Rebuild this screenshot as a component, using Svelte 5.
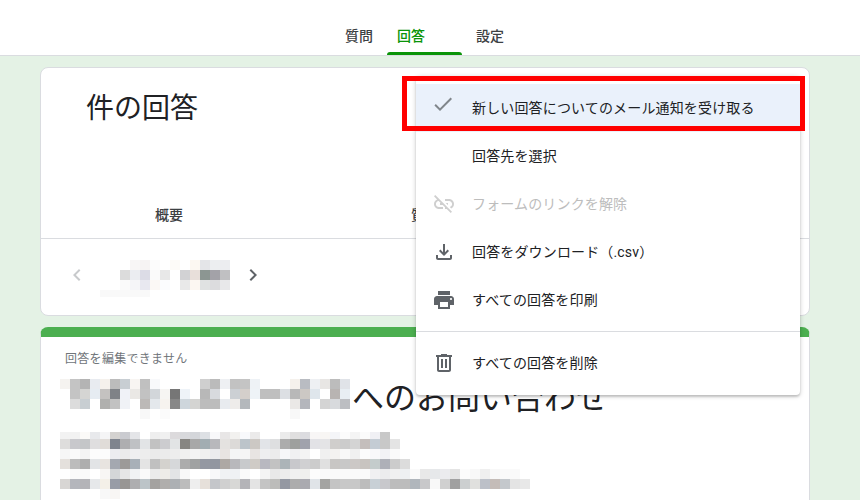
<script>
  const tabs = ['質問', '回答', '設定']
  const subTabs = ['概要', '質問', '個別']

  const menu = [
    { label: '新しい回答についてのメール通知を受け取る', icon: 'check', active: true },
    { label: '回答先を選択' },
    { label: 'フォームのリンクを解除', icon: 'unlink', disabled: true },
    { label: '回答をダウンロード（.csv）', icon: 'download' },
    { label: 'すべての回答を印刷', icon: 'print' },
    { divider: true },
    { label: 'すべての回答を削除', icon: 'trash' },
  ]

  const icons = {
    check: 'M9 16.17L4.83 12l-1.42 1.41L9 19 21 7l-1.41-1.41z',
    unlink: 'M17 7h-4v1.9h4c1.71 0 3.1 1.39 3.1 3.1 0 1.43-.98 2.63-2.31 2.98l1.46 1.46C20.88 15.61 22 13.95 22 12c0-2.76-2.24-5-5-5zm-1 4h-2.19l2 2H16zM2 4.27l3.11 3.11C3.29 8.12 2 9.91 2 12c0 2.76 2.24 5 5 5h4v-1.9H7c-1.71 0-3.1-1.39-3.1-3.1 0-1.59 1.21-2.9 2.76-3.07L8.73 11H8v2h2.73L13 15.27V17h1.73l4.01 4L20 19.74 3.27 3 2 4.27z',
    download: 'M18 15v3H6v-3H4v3c0 1.1.9 2 2 2h12c1.1 0 2-.9 2-2v-3h-2zm-1-4l-1.41-1.41L13 12.17V4h-2v8.17L8.41 9.59 7 11l5 5 5-5z',
    print: 'M19 8H5c-1.66 0-3 1.34-3 3v6h4v4h12v-4h4v-6c0-1.66-1.34-3-3-3zm-3 11H8v-5h8v5zm3-7c-.55 0-1-.45-1-1s.45-1 1-1 1 .45 1 1-.45 1-1 1zm-1-9H6v4h12V3z',
    trash: 'M15 4V3H9v1H4v2h1v13c0 1.1.9 2 2 2h10c1.1 0 2-.9 2-2V6h1V4h-5zm2 15H7V6h10v13zM9 8h2v9H9zm4 0h2v9h-2z',
  }

  // blurred-out personal data: [row height, cell colours]
  const dateBlur = [
    [10, 'fff fff fff f8f6f6 f6f3f3 fcfcfc fff fdfbf8 fff fcf8f2 e4e5e8 eceef0 ecedf0'],
    [10, 'fff fff dcdcdc ebedf1 dcdce6 fafafa e8e8e8 fff d2d2d4 e8dfda 8c9692 a3a2a8 c0c0c2'],
    [10, 'fff fff fafafa f5f5f8 e8e8f0 fbf8f5 fbfcfe fff e9e9e9 fcf7f2 e0e2e2 dcdcde e8e8ea'],
    [7, 'f9f9f9 f9f9f9 f9f9f9 f9f9f9 f9f9f9'],
  ]
  const titleBlur = [
    [10, 'f5f3f0 c4c4c4 b4b4b4 e8ebf0 f5f1ec bcbcbc c8ced3 f8f5f2 c0c0c0 f8f9fb fff fff fff fff cfcfcf bbbbbb eef0f3 c2c2c2 c4c4c4 eef2f6 fff fff fff f5f1ec b9bcc2 eef0f3 e8e6e4 bcbcbc e0e3e8'],
    [10, 'fff c4c4c4 d5d5d3 e6ecf2 c4c2c0 7f8287 f0f2f7 eae8e5 c2c2c2 d2d6da f6f5f3 767676 eef3f8 fff b8b8b8 d8dade fff ccd0d4 d4cfcb eef3f7 bfbfbf bfbfbf dcdfe3 b8b8b8 ccc8c4 dfe6ec fff b8b4b2 e8eef3'],
    [10, 'fff dcdcdc c8ced2 fff b0b0ae c2c2c2 f0f2f6 fff bcb9b7 e4e8ec f6f3ef 878787 ced6dc d4d4d2 bcbcbc bcbcbc e8ebef eeecea b4b8bc fff fff fff fff eae8e6 b4b6bc fff d4d4d4 d8dadd bcbec2'],
    [10, 'fff fff fff fff fff fff fff fff f8f8f8 fff fbfbfb fff fff fff fff fff fff fff fff fff fff fff fff f8f8f8'],
  ]
  const bodyBlur = [
    [7, 'f2f2f2 f2f2f2 fbfaf8 e8e9ec f5f5f6 d4d2d0 cacbd0 e4e5e8 fff eeeeee f0f0f0 dcdadc d8d9dc d4d6da dde0e4 f8f8fa e8e6e6 f2f1ef f8f9fc ebeaea fff fff ebebeb e0dfdf dcdce0 f8f6f6 f8f6f4 f4f5f8 fcfcfc f4f4f4 fbfbfb f0f0f4 c8c8c8'],
    [10, 'dedddc c8c8cc c4c6c8 dfdedf e0dcd8 7f848e aeaeb0 bfc1c4 e2e4e6 c2c2c2 cccccf e2e4e5 878682 a8a8a8 a2adb2 b8b8bc e4e2e0 dcdad8 bcc4ca ccc8c4 e2e4e8 dedfe0 acacac 9ea09e a0a2ac e2e2e6 e4e4e6 d0cecc cccccc d4d4d4 c4bebc c4ccd4 c8c8c8 e4e4e4'],
    [10, 'f6f6f6 fafafa f4f4f4 fcfcfc fcfcfc ececf0 ebebeb efeff1 ededed ebebeb ebebeb ededed f0f0ef f4f4f4 f0f0f0 ebebee e8e4e2 f4f5f6 f5f5f5 e8e4e2 eeeef0 ececec f6f7f9 f0f0f2 f4f4f4 fff f0f0f0 f4f2f0 f8f8f8 f0f0f0 fcfcfc f8f8fa f2f2f6 fafafa'],
    [10, 'e4e0dc bcbcbc aeaeae e2e4e6 e8e4e0 a4a8b0 9c9a98 a8b0b8 e4e4e4 c0c0c0 d4d2ce d6d8da acacac a0a2a2 9498a2 9296a0 ada8a4 b8b8bc c8cacc cfcbc6 b8b8c0 c2c2c2 acb4b8 c8c8cc d0d0d2 cccccc e0e0e0 c8c6c4 c8c8c8 ccc8c6 c8c4c0 c4cccc aeb0b8 cccccc dcdcdc'],
    [10, 'fff fafafa fafafa fff f8f6f4 d4d6d8 e6e6e6 f0f2f4 fafafa ebebeb eeece8 e2e4e6 f8f8f8 fff fff f8f8fa f0f2f4 eff1f4 fafafa fff f4f4f4 e8e8e8 ececec f0f0f0 f0f0ee fcfcfc fafafa fafafa fafafa fafafa fafafa f0f0f2 ececee f0f0f0 eef0f2 fafafa e8e8e8 e6e8ea ebebee e4e4e4 fcfcfc f8f8f8 efefef f8f8f8 fafafa fafafa'],
    [10, 'd8d6d4 b4b6bc b4b4b8 e6e8ea f4f0e8 989ca6 989694 aeaeb0 bcc4c8 a4a2a0 b0aeac acb0b4 bcbcbc eeeeee e6e0da c4c6ca d0d0d0 d8d8d6 b4b4b8 e4e4e4 c4c4c4 bcbcba 9498a2 acacac aaaab0 e0e4e8 a4a4a2 c4c4c4 c8c8c8 c8c8c8 bcbcbc c8d0d6 c8c8cc bcbcbc bcbcbc b0b6bc c8c8ca f8f8f8 d0d0d0 a0a0a0 cccfd0 e0e0de bcc0c8 c4bcb8 c4c8cc e4e4e4 e8e8e8'],
    [10, 'fff fff fff fff f8f8f8 f8f6f4 fff'],
  ]
</script>

{#snippet blur(rows)}
  <div class="blur">
    {#each rows as [h, cells]}
      <div class="blur-row" style="height:{h}px">
        {#each cells.split(' ') as c}
          <i style="background:#{c}"></i>
        {/each}
      </div>
    {/each}
  </div>
{/snippet}

<div class="page">
  <header>
    {#each tabs as tab, i}
      <div class="tab" class:active={i === 1}>
        <span>{tab}</span>
        {#if i === 1}<b></b>{/if}
      </div>
    {/each}
  </header>

  <main>
    <section class="card summary">
      <h1>件の回答</h1>
      <nav>
        {#each subTabs as tab}
          <span>{tab}</span>
        {/each}
      </nav>
      <div class="pager">
        <svg class="chev off" viewBox="0 0 24 24"><path d="M15.41 7.41L14 6l-6 6 6 6 1.41-1.41L10.83 12z" /></svg>
        {@render blur(dateBlur)}
        <svg class="chev" viewBox="0 0 24 24"><path d="M10 6L8.59 7.41 13.17 12l-4.58 4.59L10 18l6-6z" /></svg>
      </div>
    </section>

    <section class="card response">
      <p class="notice">回答を編集できません</p>
      <div class="title-row">
        {@render blur(titleBlur)}
        <h2>へのお問い合わせ</h2>
      </div>
      {@render blur(bodyBlur)}
    </section>
  </main>

  <div class="menu">
    {#each menu as item}
      {#if item.divider}
        <hr />
      {:else}
        <div class="item" class:active={item.active} class:disabled={item.disabled}>
          <span class="icon">
            {#if item.icon}
              <svg viewBox={item.icon === 'check' ? '1 4 24 24' : '0 0 24 24'}><path d={icons[item.icon]} /></svg>
            {/if}
          </span>
          <span class="label">{item.label}</span>
        </div>
      {/if}
    {/each}
  </div>

  <div class="callout"></div>
</div>

<style>
  :global(body) {
    margin: 0;
  }

  .page {
    position: relative;
    width: 860px;
    height: 500px;
    overflow: hidden;
    background: #e4f2e5;
    color: #202124;
    font-family: Roboto, "Noto Sans CJK JP", sans-serif;
    font-size: 14px;
  }

  header {
    display: flex;
    gap: 14px;
    height: 55px;
    padding-left: 345px;
    background: #fff;
    border-bottom: 1px solid #dadce0;
  }

  .tab {
    display: flex;
    flex-direction: column;
    justify-content: space-between;
    font-weight: 500;
    color: #3c4043;
  }

  .tab span {
    margin-top: 26px;
    line-height: 20px;
  }

  .tab.active {
    width: 75px;
    color: #0a9408;
  }

  .tab.active span {
    padding-left: 10px;
  }

  .tab b {
    display: block;
    height: 3px;
    background: #0a9408;
    border-radius: 3px 3px 0 0;
  }

  main {
    padding: 11px 50px 0 40px;
    width: 770px;
  }

  .card {
    background: #fff;
    border: 1px solid #dadce0;
    border-radius: 8px;
  }

  .summary {
    height: 249px;
    box-sizing: border-box;
  }

  h1 {
    margin: 0;
    height: 122px;
    padding: 21px 0 0 45px;
    box-sizing: border-box;
    font-size: 28px;
    font-weight: 400;
    line-height: 40px;
  }

  nav {
    display: grid;
    grid-template-columns: repeat(3, 1fr);
    height: 48px;
    border-bottom: 1px solid #dadce0;
  }

  nav span {
    display: flex;
    align-items: center;
    justify-content: center;
    font-weight: 500;
    color: #3c4043;
  }

  .pager {
    display: flex;
    align-items: flex-start;
    gap: 11px;
    padding: 21px 0 0 24px;
  }

  .chev {
    width: 24px;
    height: 24px;
    margin-top: 3px;
    fill: #5f6368;
  }

  .chev.off {
    fill: #c8cacc;
  }

  .blur-row {
    display: flex;
  }

  .blur-row i {
    display: block;
    flex: none;
    width: 10px;
  }

  .response {
    margin-top: 11px;
    height: 300px;
    padding: 12px 0 0 19px;
    border-top: 10px solid #4caf50;
    border-radius: 8px 8px 0 0;
  }

  .notice {
    margin: 0 0 0 5px;
    font-size: 12px;
    line-height: 20px;
    letter-spacing: .3px;
    color: #70757a;
  }

  .title-row {
    display: flex;
    margin: 10px 0 13px;
    height: 40px;
  }

  h2 {
    margin: 0 0 0 2px;
    padding-top: 2px;
    font-size: 32px;
    font-weight: 400;
    line-height: 34px;
    white-space: nowrap;
  }

  .menu {
    position: absolute;
    left: 416px;
    top: 76px;
    width: 384px;
    padding: 8px 0;
    background: #fff;
    border-radius: 4px;
    box-shadow: 0 2px 2px rgba(0, 0, 0, .14), 0 1px 5px rgba(0, 0, 0, .2);
  }

  .item {
    display: flex;
    align-items: center;
    gap: 16px;
    height: 48px;
    padding-left: 16px;
    letter-spacing: .15px;
  }

  .label {
    padding-bottom: 3px;
  }

  .item.active {
    background: #eaf1fb;
  }

  .item.disabled {
    color: #bdbdbd;
  }

  .icon {
    flex: none;
    width: 24px;
    height: 24px;
  }

  .icon svg {
    display: block;
    width: 24px;
    height: 24px;
    fill: #5f6368;
  }

  .item.active svg {
    fill: #80868b;
  }

  .item.disabled svg {
    fill: #cfcfcf;
  }

  hr {
    margin: 7px 0;
    border: 0;
    border-top: 1px solid #dadce0;
    height: 0;
  }

  .callout {
    position: absolute;
    left: 402px;
    top: 76px;
    width: 403px;
    height: 55px;
    box-sizing: border-box;
    border: 5px solid #f00;
  }
</style>
